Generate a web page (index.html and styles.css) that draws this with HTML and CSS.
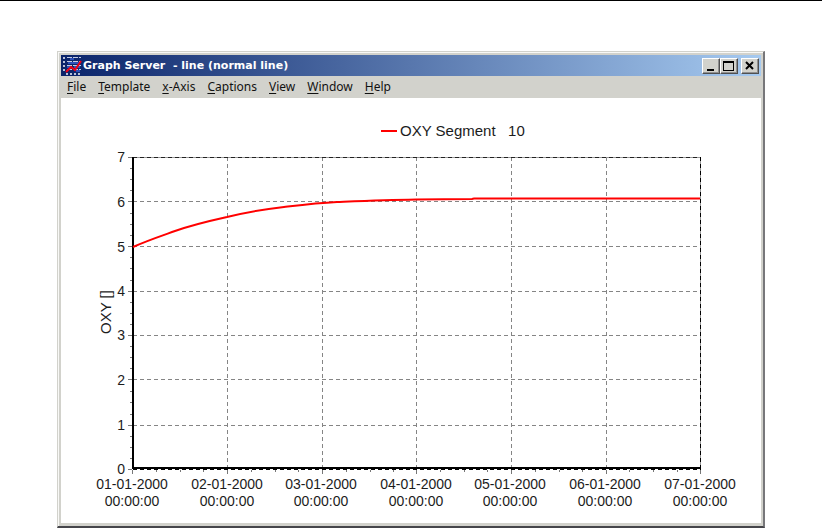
FILE: index.html
```
<!DOCTYPE html>
<html lang="en">
<head>
<meta charset="utf-8">
<title>Graph Server</title>
<link rel="stylesheet" href="styles.css">
</head>
<body>
<main class="window">
  <header class="titlebar">
    <svg class="app-icon" width="22" height="20" viewBox="0 0 22 20" shape-rendering="crispEdges" aria-hidden="true">
      <path d="M2 2h2M2 6h2M2 10h2M2 14h2M5 18h2M9 18h2M13 18h2M17 18h2" stroke="#b9c0d8" stroke-width="2"/>
      <path d="M6 1.500h14M6 5.500h14M6 9.500h14M6 13.500h14" stroke="#c4cce4" stroke-dasharray="5 1"/>
      <path d="M9 3h4M7 7h12M6 11h3M13 11h6M15 15h4" stroke="#2c50b8" stroke-width="2"/>
      <path d="M5 16l5-5 4 3 6-9" fill="none" stroke="#f00018" stroke-width="2" shape-rendering="auto"/>
    </svg>
    <h1 class="title">Graph Server&nbsp; - line (normal line)</h1>
    <div class="controls">
      <button class="control" type="button" aria-label="Minimize"><svg width="16" height="12" viewBox="0 0 16 12" shape-rendering="crispEdges"><path d="M4 9h7v2H4z"/></svg></button>
      <button class="control" type="button" aria-label="Maximize"><svg width="16" height="12" viewBox="0 0 16 12" shape-rendering="crispEdges"><path fill-rule="evenodd" d="M2 1h11v10H2zM3 3v7h9V3z"/></svg></button>
      <button class="control control-close" type="button" aria-label="Close"><svg width="16" height="12" viewBox="0 0 16 12"><path d="M4 2l7 7M11 2l-7 7" stroke="#000" stroke-width="2"/></svg></button>
    </div>
  </header>
  <nav class="menubar">
    <button type="button"><u>F</u>ile</button>
    <button type="button"><u>T</u>emplate</button>
    <button type="button"><u>x</u>-Axis</button>
    <button type="button"><u>C</u>aptions</button>
    <button type="button"><u>V</u>iew</button>
    <button type="button"><u>W</u>indow</button>
    <button type="button"><u>H</u>elp</button>
  </nav>
  <svg class="chart" viewBox="61 98 700 425" role="img" aria-label="OXY Segment 10">
    <path class="legend-key" d="M381 131h16"/>
    <text class="legend" x="400" y="136">OXY Segment &#160; 10</text>

    <g shape-rendering="crispEdges">
      <path class="grid" d="M133 201.500H700M133 246.500H700M133 291.500H700M133 335.500H700M133 379.500H700M133 425.500H700"/>
      <path class="grid" d="M227.500 157V469M322.500 157V469M416.500 157V469M511.500 157V469M606.500 157V469"/>
      <path class="frame" d="M133 157.500H700"/>
      <path class="frame-dash" d="M133 157.500H700"/>
      <path class="frame" d="M700.500 157V469"/>
      <path class="frame-right" d="M700.500 157V469"/>
      <path class="axis" d="M133 157V469M132 468H701"/>
      <path class="axis-dash" d="M133 469.500H701"/>
      <path class="tick" d="M128 157.500h4M128 201.500h4M128 246.500h4M128 291.500h4M128 335.500h4M128 379.500h4M128 425.500h4M128 469.500h4"/>
      <path class="tick" d="M130 168.500h2M130 179.500h2M130 190.500h2M130 213.500h2M130 224.500h2M130 235.500h2M130 257.500h2M130 268.500h2M130 280.500h2M130 302.500h2M130 313.500h2M130 324.500h2M130 346.500h2M130 357.500h2M130 368.500h2M130 391.500h2M130 402.500h2M130 414.500h2M130 436.500h2M130 447.500h2M130 458.500h2"/>
      <path class="tick" d="M132.500 470v4M227.500 470v4M322.500 470v4M416.500 470v4M511.500 470v4M606.500 470v4M700.500 470v4"/>
      <path class="tick" d="M156.500 470v2M180.500 470v2M203.500 470v2M251.500 470v2M275.500 470v2M298.500 470v2M346.500 470v2M370.500 470v2M393.500 470v2M440.500 470v2M464.500 470v2M487.500 470v2M535.500 470v2M559.500 470v2M582.500 470v2M629.500 470v2M653.500 470v2M677.500 470v2"/>
    </g>

    <path class="series" d="M133 247C146 241 161 236 175 231C192 225 209 221 227 217C247 212 266 209 284 207C301 205 317 203 337 202C362 201 385 200 416 199.500L472 199L474 198.500H700"/>

    <g class="labels-y">
      <text x="125" y="162">7</text>
      <text x="125" y="207">6</text>
      <text x="125" y="252">5</text>
      <text x="125" y="296">4</text>
      <text x="125" y="340">3</text>
      <text x="125" y="385">2</text>
      <text x="125" y="430">1</text>
      <text x="125" y="474">0</text>
    </g>
    <text class="axis-title" transform="translate(111 334) rotate(-90)">OXY []</text>
    <g class="labels-x">
      <text x="132" y="489">01-01-2000<tspan x="132" dy="17">00:00:00</tspan></text>
      <text x="227" y="489">02-01-2000<tspan x="227" dy="17">00:00:00</tspan></text>
      <text x="321" y="489">03-01-2000<tspan x="321" dy="17">00:00:00</tspan></text>
      <text x="416" y="489">04-01-2000<tspan x="416" dy="17">00:00:00</tspan></text>
      <text x="510" y="489">05-01-2000<tspan x="510" dy="17">00:00:00</tspan></text>
      <text x="605" y="489">06-01-2000<tspan x="605" dy="17">00:00:00</tspan></text>
      <text x="700" y="489">07-01-2000<tspan x="700" dy="17">00:00:00</tspan></text>
    </g>
  </svg>
</main>
</body>
</html>
```
FILE: styles.css
```
* { box-sizing: border-box; }
body {
  margin: 0;
  background: #fff;
  border-top: 1px solid #000;
}
.window {
  margin: 50px 57px 0;
  padding: 3px 2px 3px 3px;
  background: #d2d2cc;
  border: 1px solid #d2d2cc;
  border-right: 2px solid #77777a;
  border-bottom: 2px solid #45454a;
  box-shadow: inset 1px 1px #f8f8f6;
}
.titlebar {
  display: flex;
  align-items: center;
  height: 21px;
  padding: 0 2px 0 0;
  background: linear-gradient(to right, #0a246a, #a6caf0);
}
.app-icon { flex: none; }
.title {
  flex: 1;
  margin: 0;
  color: #fff;
  font: bold 11px/20px "DejaVu Sans", sans-serif;
  white-space: nowrap;
}
.controls { display: flex; }
.control {
  display: flex;
  width: 18px;
  height: 16px;
  padding: 1px 0 0;
  background: #d2d2cc;
  border: 1px solid;
  border-color: #fff #505050 #505050 #fff;
  box-shadow: inset -1px -1px #909090;
}
.control-close { margin-left: 3px; }
.menubar {
  display: flex;
  gap: 12px;
  height: 22px;
  padding: 0 6px;
}
.menubar button {
  padding: 0;
  border: 0;
  background: none;
  color: #111;
  font: 12px/20px "Noto Sans", sans-serif;
}
.menubar u { text-underline-offset: 2px; }
.chart {
  display: block;
  width: 100%;
  background: #fff;
}
.chart text {
  font: 14px "Liberation Sans", sans-serif;
  fill: #1c1c1c;
  white-space: pre;
}
.chart .legend,
.chart .axis-title { font-size: 15px; }
.labels-y { text-anchor: end; }
.labels-x { text-anchor: middle; }
.chart path { fill: none; }
.legend-key { stroke: #f00; stroke-width: 2; }
.series { stroke: #f00; stroke-width: 2; }
.grid { stroke: #858585; stroke-dasharray: 4 3; }
.frame { stroke: #999; }
.frame-dash { stroke: #222; stroke-dasharray: 4 3; }
.frame-right { stroke: #000; stroke-dasharray: 4 3; }
.axis { stroke: #000; stroke-width: 2; }
.axis-dash { stroke: #000; stroke-dasharray: 4 3; }
.tick { stroke: #777; }
```
